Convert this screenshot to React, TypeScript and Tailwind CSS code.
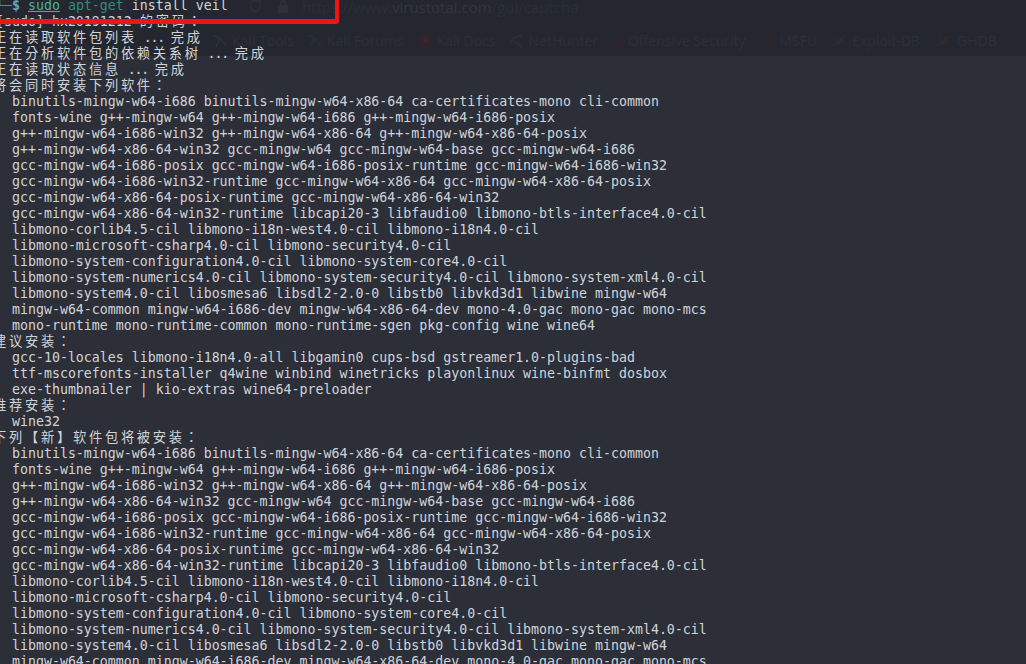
const A = [
"  binutils-mingw-w64-i686 binutils-mingw-w64-x86-64 ca-certificates-mono cli-common",
"  fonts-wine g++-mingw-w64 g++-mingw-w64-i686 g++-mingw-w64-i686-posix",
"  g++-mingw-w64-i686-win32 g++-mingw-w64-x86-64 g++-mingw-w64-x86-64-posix",
"  g++-mingw-w64-x86-64-win32 gcc-mingw-w64 gcc-mingw-w64-base gcc-mingw-w64-i686",
"  gcc-mingw-w64-i686-posix gcc-mingw-w64-i686-posix-runtime gcc-mingw-w64-i686-win32",
"  gcc-mingw-w64-i686-win32-runtime gcc-mingw-w64-x86-64 gcc-mingw-w64-x86-64-posix",
"  gcc-mingw-w64-x86-64-posix-runtime gcc-mingw-w64-x86-64-win32",
"  gcc-mingw-w64-x86-64-win32-runtime libcapi20-3 libfaudio0 libmono-btls-interface4.0-cil",
"  libmono-corlib4.5-cil libmono-i18n-west4.0-cil libmono-i18n4.0-cil",
"  libmono-microsoft-csharp4.0-cil libmono-security4.0-cil",
"  libmono-system-configuration4.0-cil libmono-system-core4.0-cil",
"  libmono-system-numerics4.0-cil libmono-system-security4.0-cil libmono-system-xml4.0-cil",
"  libmono-system4.0-cil libosmesa6 libsdl2-2.0-0 libstb0 libvkd3d1 libwine mingw-w64",
"  mingw-w64-common mingw-w64-i686-dev mingw-w64-x86-64-dev mono-4.0-gac mono-gac mono-mcs",
"  mono-runtime mono-runtime-common mono-runtime-sgen pkg-config wine wine64",
];
type Line = { cn?: string; suffix?: string; text?: string };
const pkg = (l: string): Line => ({ text: l });
const lines: Line[] = [
  { cn: "正在读取软件包列表", suffix: " ... " , text: "完成" },
  { cn: "正在分析软件包的依赖关系树", suffix: " ... ", text: "完成" },
  { cn: "正在读取状态信息", suffix: " ... ", text: "完成" },
  { cn: "将会同时安装下列软件：" },
  ...A.map(pkg),
  { cn: "建议安装：" },
  pkg("  gcc-10-locales libmono-i18n4.0-all libgamin0 cups-bsd gstreamer1.0-plugins-bad"),
  pkg("  ttf-mscorefonts-installer q4wine winbind winetricks playonlinux wine-binfmt dosbox"),
  pkg("  exe-thumbnailer | kio-extras wine64-preloader"),
  { cn: "推荐安装：" },
  pkg("  wine32"),
  { cn: "下列【新】软件包将被安装：" },
  ...A.map(pkg),
];

function Dragon() {
  return (
    <svg width="15" height="14" viewBox="0 0 15 14" fill="none" stroke="#2a2e3b" strokeWidth="2" className="shrink-0">
      <path d="M1 2c4 0 7 2 9 5l4 5M4 1l3 6-3 5" />
    </svg>
  );
}
function Book() {
  return (
    <svg width="11" height="15" viewBox="0 0 11 15" className="shrink-0">
      <rect width="11" height="15" rx="1" fill="#30252c" />
      <circle cx="5.5" cy="7" r="2" fill="#3a282e" />
    </svg>
  );
}
function Hunter() {
  return (
    <svg width="15" height="14" viewBox="0 0 15 14" fill="none" stroke="#2e2b33" strokeWidth="2.5" className="shrink-0">
      <path d="M1 11C2 5 6 2 13 2M6 8l7 5" />
    </svg>
  );
}
function Tower() {
  return (
    <svg width="11" height="16" viewBox="0 0 11 16" className="shrink-0">
      <path d="M4 0h3v11h4v5H0v-5h4z" fill="#2e252c" />
    </svg>
  );
}
function Spider() {
  return (
    <svg width="16" height="12" viewBox="0 0 16 12" fill="none" stroke="#302a2a" strokeWidth="2" className="shrink-0">
      <path d="M1 11l7-5 7-5M4 3l5 7M8 2l5 6" />
    </svg>
  );
}

const ghost = [
  { label: "Kali Tools", icon: <Dragon />, ml: "ml-[212px]" },
  { label: "Kali Forums", icon: <Dragon />, ml: "ml-[13px]" },
  { label: "Kali Docs", icon: <Book />, ml: "ml-[17px]" },
  { label: "NetHunter", icon: <Hunter />, ml: "ml-[13px]" },
  { label: "Offensive Security", icon: <Tower />, ml: "ml-[14px]" },
  { label: "MSFU", icon: <Tower />, ml: "ml-[18px]" },
  { label: "Exploit-DB", icon: <Spider />, ml: "ml-[14px]" },
  { label: "GHDB", icon: <Spider />, ml: "ml-[16px]" },
];

export default function App() {
  return (
    <div className="relative w-[1026px] h-[664px] overflow-hidden bg-[#2c2f38] text-[#d0d4d9] font-['DejaVu_Sans_Mono','Noto_Sans_CJK_TC',monospace] text-[13.28px] leading-4 whitespace-pre">
      <div className="absolute inset-x-0 top-0 h-[56px] bg-[#24272f]" />
      <div className="absolute left-0 top-[31px] flex items-center font-['Open_Sans',sans-serif] text-[14px] leading-5 text-[#2c2f39]">
        {ghost.map((g) => (
          <span key={g.label} className={`flex items-center gap-[5px] ${g.ml}`}>
            {g.icon}
            {g.label}
          </span>
        ))}
      </div>
      <div className="absolute left-[250px] top-[-3px] flex items-start gap-[16px] font-['Open_Sans',sans-serif] text-[15px] leading-5">
        <svg width="11" height="14" viewBox="0 0 11 14" fill="none" stroke="#2c2f38" strokeWidth="1.5" className="mt-[2px]">
          <path d="M5.5 1l4.5 1.5V7c0 3-2 5-4.5 6C3 12 1 10 1 7V2.5z" />
        </svg>
        <svg width="12" height="14" viewBox="0 0 12 14" fill="#2d3039" className="mt-[2px]">
          <path d="M3 6V4a3 3 0 016 0v2h2v8H1V6zm1.5 0h3V4a1.5 1.5 0 00-3 0z" />
        </svg>
        <span className="ml-[-3px] text-[#2b2e37]">
          https://www.<span className="text-[#32353e]">virustotal.com</span>/gui/captcha
        </span>
      </div>

      <div className="relative mt-[-2px] ml-[-4px] flex flex-col">
        <div className="h-4">
          <span className="text-[#3aa08c]">└─</span>
          <span className="text-[#5fa8d0] font-bold">$ </span>
          <span className="text-[#45b39d] underline">sudo</span>
          <span className="text-[#2f8c7c]"> apt-get</span>
          <span> install veil</span>
        </div>
        <div className="h-4">[sudo] hx20191212 <span className="tracking-[2.7px]">的密码：</span></div>
        {lines.map((l, i) =>
          l.cn ? (
            <div key={i} className="h-4 ml-[-3px]">
              <span className="tracking-[2.72px]">{l.cn}</span>
              {l.suffix && <span className="tracking-[-1.2px]">{l.suffix}</span>}
              {l.text && <span className="tracking-[2.72px]">{l.text}</span>}
            </div>
          ) : (
            <div key={i} className="h-4">{l.text}</div>
          )
        )}
      </div>

      <div className="absolute left-[-6px] top-[-6px] w-[345px] h-[30px] border-4 border-b-[5px] border-[#f01414] rounded-br-[3px]" />
    </div>
  );
}
